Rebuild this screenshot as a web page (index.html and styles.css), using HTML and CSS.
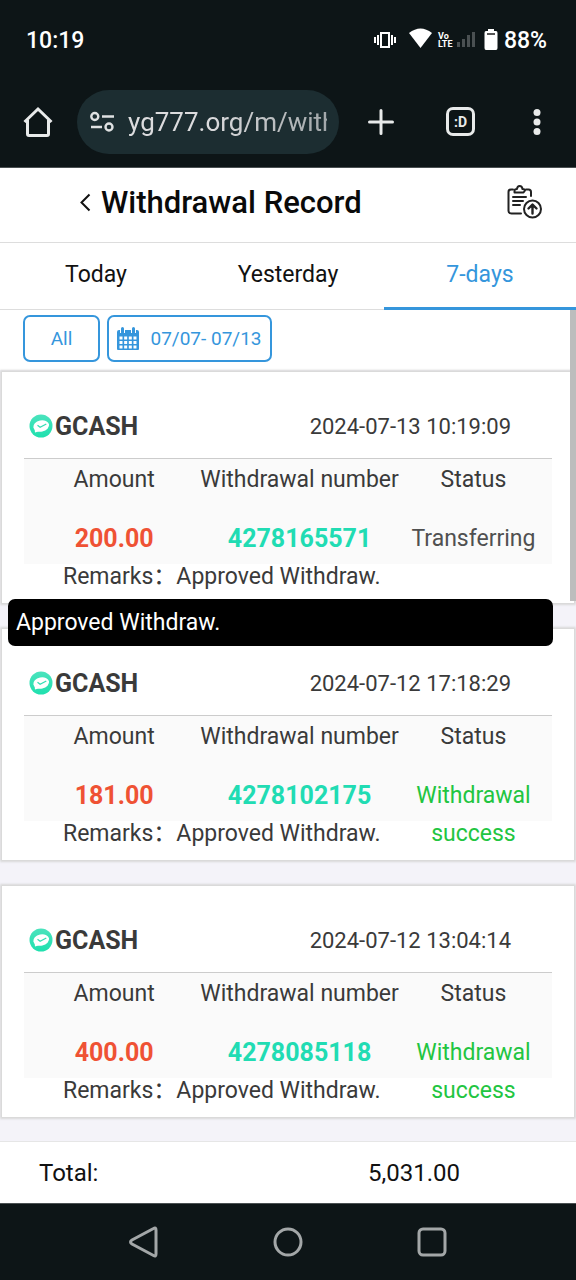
FILE: index.html
```html
<!DOCTYPE html>
<html lang="en">
<head>
<meta charset="utf-8">
<meta name="viewport" content="width=device-width, initial-scale=1">
<title>Withdrawal Record</title>
<link rel="stylesheet" href="styles.css">
</head>
<body>
<svg class="defs" aria-hidden="true">
  <defs>
    <linearGradient id="coin" x1="0" y1="0" x2="0" y2="1">
      <stop offset="0" stop-color="#4be3bd"/>
      <stop offset="1" stop-color="#1fe0ae"/>
    </linearGradient>
    <symbol id="pay" viewBox="0 0 24 24">
      <circle cx="12" cy="12" r="11.5" fill="url(#coin)"/>
      <ellipse cx="12.200" cy="12" rx="8" ry="5.600" transform="rotate(-12 12 12)" fill="#fff"/>
      <path d="M5.500 14l.5 4.500 5-1.500z" fill="#fff"/>
      <path d="M8.500 11.300l2.600 2 6.200-3.300" fill="none" stroke="#34deb4" stroke-width="1.300"/>
    </symbol>
  </defs>
</svg>
<div class="screen">
  <header class="browser">
    <div class="status">
      <span class="clock">10:19</span>
      <svg class="signals" width="102" height="24" viewBox="0 0 102 24" aria-hidden="true">
        <g fill="#fff">
          <path d="M0 9h2v6H0zM3 7h2v10H3zM17 7h2v10h-2zM20 9h2v6h-2z"/>
          <path d="M35 5q11.500-9 23 0L46.500 20z"/>
          <path d="M7 5h8v14H7z" fill="none" stroke="#fff" stroke-width="2"/>
        </g>
        <text x="64" y="11" class="volte">Vo</text>
        <text x="64" y="19" class="volte">LTE</text>
        <path d="M83 14h3v5h-3zM88 11h3v8h-3zM93 7h3v12h-3zM98 4h3v15h-3z" fill="#4a5052"/>
      </svg>
      <svg class="battery" width="14" height="24" viewBox="0 0 14 24" aria-hidden="true">
        <path d="M4 1h6v2h2q1.500 0 1.500 2v15q0 2-1.500 2H2q-1.500 0-1.500-2V5q0-2 1.500-2h2z" fill="#fff"/>
        <path d="M3 6h8" stroke="#555" stroke-width="2"/>
      </svg>
      <span class="percent">88%</span>
    </div>
    <div class="toolbar">
      <button class="tool home" aria-label="Home">
        <svg width="30" height="32" viewBox="0 0 30 32"><path d="M1.500 16L15 3 28.500 16M4.500 14V28q0 1.500 1.500 1.500h18q1.500 0 1.500-1.500V14" fill="none" stroke="#e8eaea" stroke-width="3"/></svg>
      </button>
      <div class="address">
        <svg width="24" height="22" viewBox="0 0 24 22" aria-hidden="true"><g fill="none" stroke="#dfe1e2" stroke-width="2.400"><circle cx="4.800" cy="5.500" r="3.500"/><path d="M12 5.500h12M1 16h11"/><circle cx="19" cy="16" r="3.500"/></g></svg>
        <span class="url">yg777.org/m/with</span>
      </div>
      <button class="tool add" aria-label="New tab">
        <svg width="28" height="28" viewBox="0 0 28 28"><path d="M14 2.500v23M2.500 14h23" stroke="#e8eaea" stroke-width="3" stroke-linecap="round"/></svg>
      </button>
      <button class="tool tabs-count" aria-label="Open tabs">:D</button>
      <button class="tool more" aria-label="Menu">
        <svg width="8" height="28" viewBox="0 0 8 28"><g fill="#e8eaea"><circle cx="4" cy="4.500" r="3.500"/><circle cx="4" cy="14" r="3.500"/><circle cx="4" cy="23.500" r="3.500"/></g></svg>
      </button>
    </div>
  </header>

  <div class="title-bar">
    <button class="back" aria-label="Back"><svg width="12" height="20" viewBox="0 0 12 20"><path d="M10.500 2.500L2.500 10.500l8 8" fill="none" stroke="#111" stroke-width="2"/></svg></button>
    <h1>Withdrawal Record</h1>
    <button class="report" aria-label="Withdrawal report">
      <svg width="36" height="36" viewBox="0 0 36 36"><g fill="none" stroke="#222" stroke-width="2" stroke-linecap="round" stroke-linejoin="round"><path d="M7 5.500H5Q2.500 5.500 2.500 8v19q0 2.500 3 2.500H15M20 5.500h2.500Q25 5.500 25 8v4"/><path d="M8.500 8.500V6.500q0-1.500 2.500-1.500 .3-3 2.700-3t2.800 3q2.500 0 2.500 1.500l-1.500 2z"/><path d="M7 13h13M7 17h10M7 21h7"/><circle cx="26.500" cy="25" r="8.500"/><path d="M26.500 29.500V21M22.500 24.500l4-4 4 4" stroke-width="2.400"/></g></svg>
    </button>
  </div>

  <nav class="periods">
    <button>Today</button>
    <button>Yesterday</button>
    <button class="active">7-days</button>
  </nav>

  <main class="records">
    <div class="filters">
      <button class="filter all">All</button>
      <button class="filter dates">
        <svg width="22" height="24" viewBox="0 0 22 24" aria-hidden="true"><path d="M2 3h18q2 0 2 2v17q0 1-1 1H1q-1 0-1-1V5q0-2 2-2z" fill="#3596dc"/><path d="M5.500 1v5M16.500 1v5" stroke="#fff" stroke-width="5"/><path d="M5.500 1.500v4M16.500 1.500v4" stroke="#3596dc" stroke-width="3" stroke-linecap="round"/><path d="M2.500 11h17M2.500 15.500h17M2.500 20h17" stroke="#fff" stroke-width="3" stroke-dasharray="3 1.660"/></svg>
        <span>07/07- 07/13</span>
      </button>
    </div>

    <article class="card">
      <div class="card-head"><svg class="pay" aria-hidden="true"><use href="#pay"/></svg><h2>GCASH</h2><time>2024-07-13 10:19:09</time></div>
      <table class="detail">
        <thead><tr><th class="amount">Amount</th><th class="number">Withdrawal number</th><th class="state">Status</th></tr></thead>
        <tbody>
          <tr class="values"><td class="amount">200.00</td><td class="number">4278165571</td><td class="state pending" rowspan="2">Transferring</td></tr>
          <tr class="remarks"><td colspan="2">Remarks：Approved Withdraw.</td></tr>
        </tbody>
      </table>
      <div class="toast" role="tooltip">Approved Withdraw.</div>
    </article>

    <article class="card">
      <div class="card-head"><svg class="pay" aria-hidden="true"><use href="#pay"/></svg><h2>GCASH</h2><time>2024-07-12 17:18:29</time></div>
      <table class="detail">
        <thead><tr><th class="amount">Amount</th><th class="number">Withdrawal number</th><th class="state">Status</th></tr></thead>
        <tbody>
          <tr class="values"><td class="amount">181.00</td><td class="number">4278102175</td><td class="state success" rowspan="2">Withdrawal success</td></tr>
          <tr class="remarks"><td colspan="2">Remarks：Approved Withdraw.</td></tr>
        </tbody>
      </table>
    </article>

    <article class="card">
      <div class="card-head"><svg class="pay" aria-hidden="true"><use href="#pay"/></svg><h2>GCASH</h2><time>2024-07-12 13:04:14</time></div>
      <table class="detail">
        <thead><tr><th class="amount">Amount</th><th class="number">Withdrawal number</th><th class="state">Status</th></tr></thead>
        <tbody>
          <tr class="values"><td class="amount">400.00</td><td class="number">4278085118</td><td class="state success" rowspan="2">Withdrawal success</td></tr>
          <tr class="remarks"><td colspan="2">Remarks：Approved Withdraw.</td></tr>
        </tbody>
      </table>
    </article>
    <div class="scroll-thumb"></div>
  </main>

  <div class="total"><span>Total:</span><span class="sum">5,031.00</span></div>

  <footer class="system">
    <button aria-label="Back"><svg width="32" height="36" viewBox="0 0 32 36"><path d="M25.500 4.500Q28 3 28 6v24q0 3-2.500 1.500L4 20q-3-2 0-4z" fill="none" stroke="#a3a7a8" stroke-width="3"/></svg></button>
    <button aria-label="Home"><svg width="32" height="32" viewBox="0 0 32 32"><circle cx="16" cy="16" r="13" fill="none" stroke="#a3a7a8" stroke-width="3"/></svg></button>
    <button aria-label="Recent apps"><svg width="32" height="32" viewBox="0 0 32 32"><rect x="3" y="3" width="26" height="26" rx="4" fill="none" stroke="#a3a7a8" stroke-width="3"/></svg></button>
  </footer>
</div>
</body>
</html>
```
FILE: styles.css
```css
* { box-sizing: border-box; }

body {
  margin: 0;
  font-family: Roboto, "Noto Sans CJK SC", sans-serif;
  font-size: 23px;
  color: #3a3a3a;
  background: #f4f3f9;
}

button {
  margin: 0;
  padding: 0;
  border: 0;
  background: none;
  font: inherit;
  color: inherit;
  cursor: pointer;
}

svg { display: block; flex: none; }
.defs { position: absolute; width: 0; height: 0; }

.screen {
  display: flex;
  flex-direction: column;
  min-height: 100vh;
}

/* Browser chrome */
.browser {
  background: #0d1517;
  border-bottom: 1px solid #4a5052;
  color: #fff;
}

.status {
  display: flex;
  align-items: center;
  height: 78px;
  padding: 2px 29px 0 26px;
  font-size: 23px;
  font-weight: 500;
}
.signals { margin-left: auto; }
.battery { margin: 0 6px 0 8px; }
.volte { font: 700 9px "Liberation Sans Narrow", Roboto, sans-serif; fill: #fff; }

.toolbar {
  display: flex;
  align-items: center;
  height: 89px;
  padding: 0 35px 2px 23px;
}
.home { margin-right: 24px; }
.add { margin: 0 51px 0 28px; }
.address {
  display: flex;
  align-items: center;
  flex: 1;
  min-width: 0;
  gap: 14px;
  height: 64px;
  padding: 0 12px 0 13px;
  border-radius: 32px;
  background: #1c2d31;
}
.url {
  flex: 1;
  overflow: hidden;
  white-space: nowrap;
  font-size: 26px;
  color: #dcdcde;
  mask-image: linear-gradient(90deg, #000 40%, rgba(0, 0, 0, .7));
}
.tabs-count {
  width: 29px;
  height: 29px;
  margin-right: 58px;
  border: 3px solid #e8eaea;
  border-radius: 7px;
  font-size: 14px;
  font-weight: 700;
  line-height: 22px;
  color: #e8eaea;
}

/* Page heading and period tabs */
.title-bar {
  display: flex;
  align-items: center;
  height: 75px;
  padding: 0 34px 6px 79px;
  border-bottom: 1px solid #ddd;
  background: #fff;
  color: #0a0a0a;
}
.title-bar h1 {
  margin: 0 auto 0 10px;
  font-size: 31px;
  font-weight: 500;
}

.periods {
  display: grid;
  grid-template-columns: repeat(3, 1fr);
  height: 67px;
  border-bottom: 1px solid #ddd;
  background: #fff;
  color: #111;
}
.periods button { height: 67px; padding-bottom: 4px; }
.periods .active {
  padding-bottom: 1px;
  border-bottom: 3px solid #3596dc;
  color: #3596dc;
}

/* Filters */
.records { position: relative; flex: 1; }
.filters {
  display: flex;
  gap: 7px;
  padding: 5px 23px 8px;
  margin-bottom: 2px;
  background: #fff;
}
.filter {
  display: flex;
  align-items: center;
  justify-content: center;
  gap: 11px;
  height: 47px;
  border: 2px solid #3596dc;
  border-radius: 7px;
  font-size: 19px;
  color: #3596dc;
}
.all { width: 77px; }
.dates { width: 165px; }

/* Record cards */
.card {
  position: relative;
  min-height: 231px;
  margin: 0 2px 26px;
  padding: 0 22px;
  background: #fff;
  box-shadow: 0 0 2px 2px #d8d8d8;
}
.card:last-of-type { margin-bottom: 24px; }
.card-head {
  display: flex;
  align-items: center;
  height: 87px;
  padding: 22px 41px 0 5px;
  border-bottom: 1px solid #ccc;
}
.pay { width: 24px; height: 24px; }
.card-head h2 {
  margin: 0 auto 0 2px;
  font-size: 25px;
  font-weight: 700;
}
.card-head time { font-size: 22px; }

.detail {
  width: 100%;
  table-layout: fixed;
  border-collapse: collapse;
  background: linear-gradient(#fafafa, #fafafa) top / 100% 105px no-repeat;
  text-align: center;
}
.detail th, .detail td { padding: 0; font-weight: 400; }
.detail th { height: 40px; white-space: nowrap; }
.detail .amount { width: 33%; padding-left: 6px; }
.detail .number { padding-left: 2px; }
.detail .state { width: 29%; padding-right: 4px; }
.detail .values td { padding-top: 21px; line-height: 38px; vertical-align: top; }
.detail .values { height: 65px; }
.detail .values .amount { color: #ef5234; font-size: 25px; font-weight: 700; }
.detail .values .number { color: #21dcb3; font-size: 25px; font-weight: 700; }
.detail .pending { color: #505050; }
.detail .success { color: #22c541; }
.detail .remarks td {
  height: 32px;
  padding-left: 39px;
  line-height: 26px;
  text-align: left;
  vertical-align: top;
  white-space: nowrap;
}

.toast {
  position: absolute;
  z-index: 2;
  top: 227px;
  left: 6px;
  right: 21px;
  padding: 0 8px;
  border-radius: 7px;
  background: #000;
  color: #fff;
  line-height: 47px;
}

.scroll-thumb {
  position: absolute;
  top: 0;
  right: 0;
  width: 6px;
  height: 35%;
  background: #bdbdbd;
}

.total {
  display: grid;
  grid-template-columns: 1fr 1fr;
  align-items: center;
  height: 62px;
  padding: 0 37px 0 39px;
  border-top: 1px solid #e6e6e6;
  background: #fff;
  color: #111;
  font-size: 24px;
}
.sum { text-align: center; }

/* System navigation */
.system {
  display: flex;
  justify-content: center;
  align-items: center;
  gap: 112px;
  height: 77px;
  border-top: 1px solid #4a5052;
  background: #0d1517;
}
```
